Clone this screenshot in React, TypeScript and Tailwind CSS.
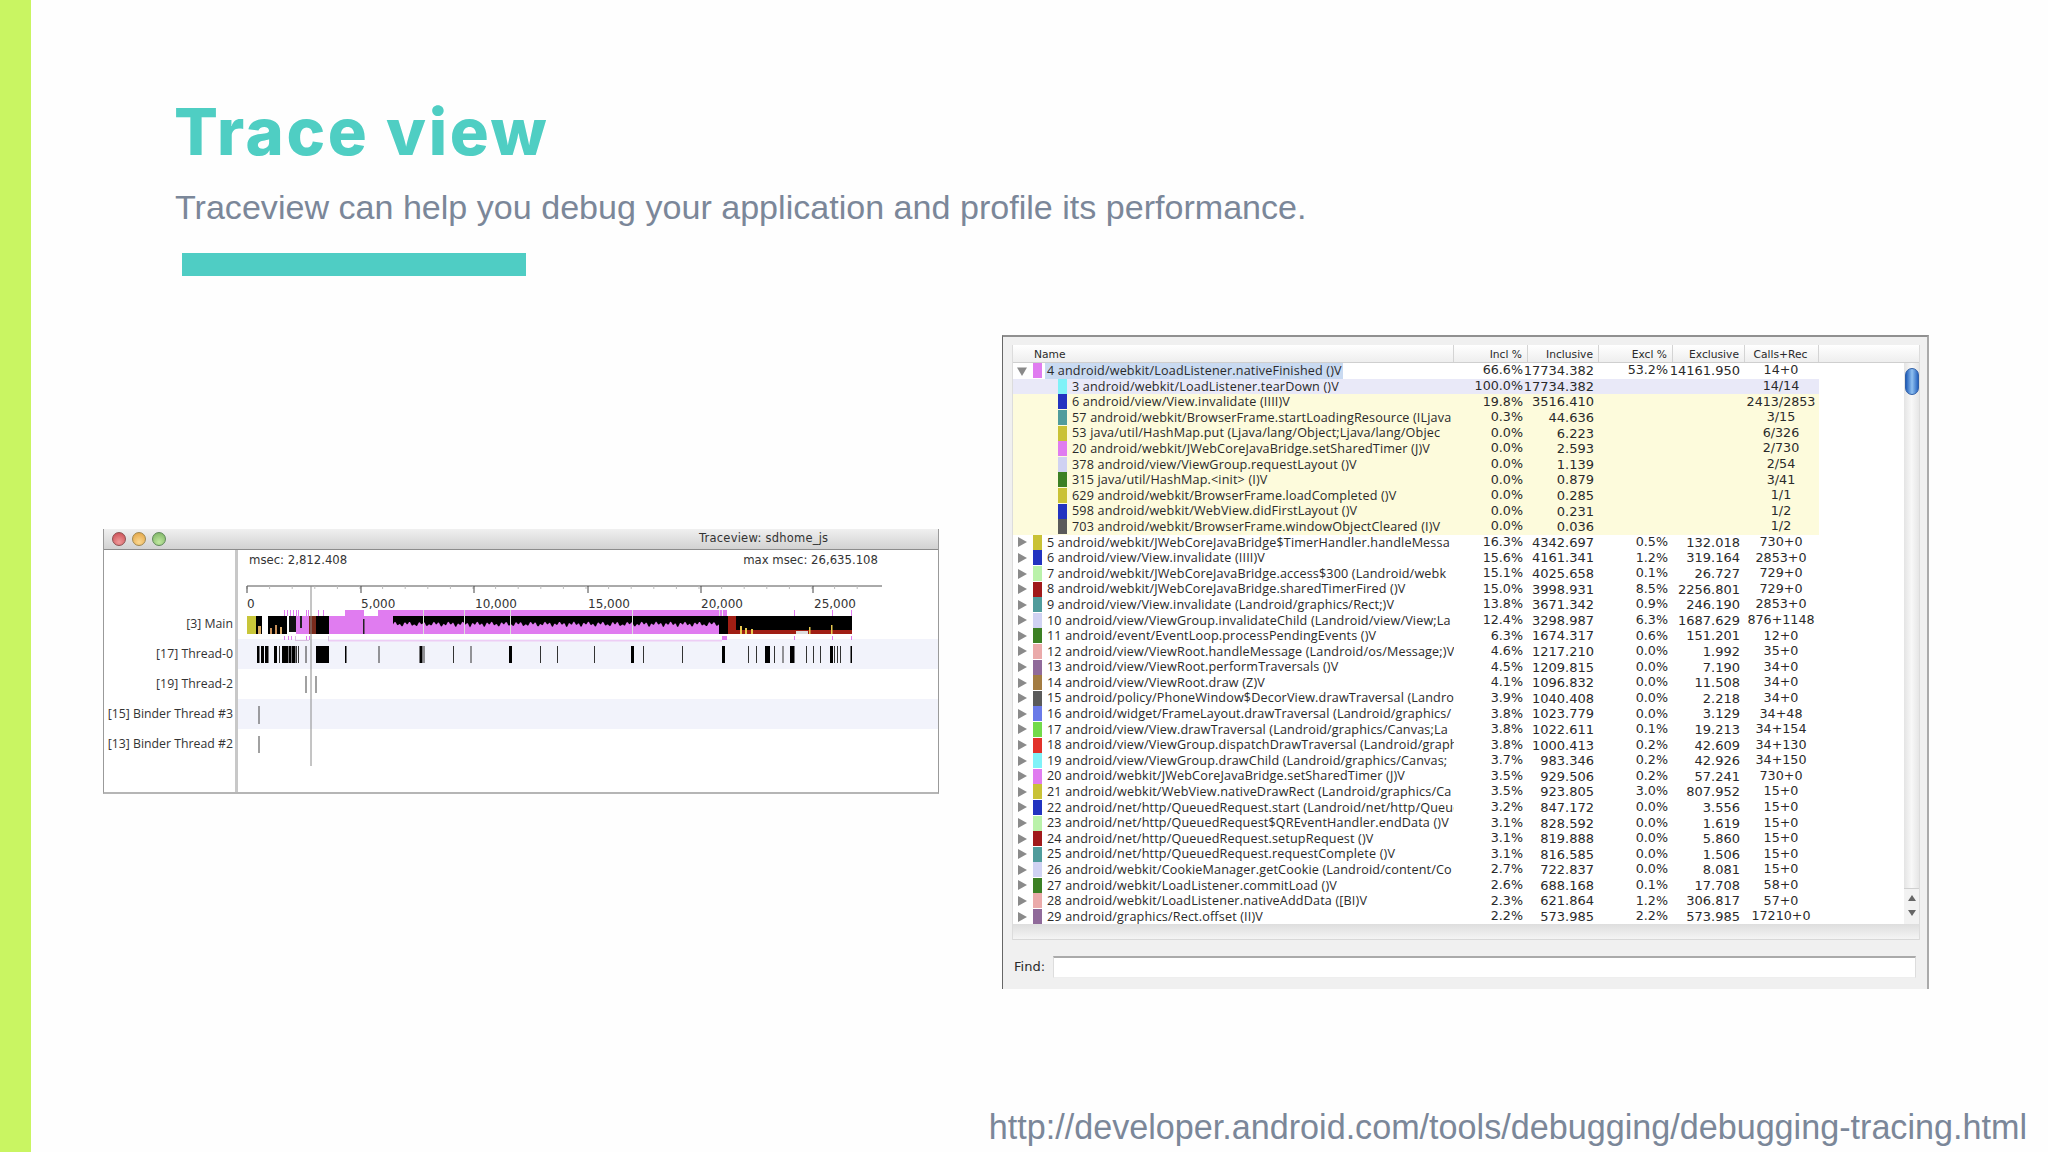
import React from "react";

type Row = { c: string; n: string; a: string; b: string; d?: string; e?: string; f: string; child?: boolean };

const pink = "#e07cf0", cyan = "#80f2f8", blue = "#2233c0", teal = "#509c9c", yel = "#c9c236", lav = "#d0d2f2",
  grn = "#3c8024", gray = "#5a5a5a", lgrn = "#baf2aa", dred = "#a01a1a", sal = "#eaaaaa", pur = "#906a9a",
  brn = "#a37c42", vio = "#6a7ae8", lime = "#72da4a", red = "#e2322a";

const rows: Row[] = [
  { c: pink, n: "4 android/webkit/LoadListener.nativeFinished ()V", a: "66.6%", b: "17734.382", d: "53.2%", e: "14161.950", f: "14+0" },
  { child: true, c: cyan, n: "3 android/webkit/LoadListener.tearDown ()V", a: "100.0%", b: "17734.382", f: "14/14" },
  { child: true, c: blue, n: "6 android/view/View.invalidate (IIII)V", a: "19.8%", b: "3516.410", f: "2413/2853" },
  { child: true, c: teal, n: "57 android/webkit/BrowserFrame.startLoadingResource (ILjava", a: "0.3%", b: "44.636", f: "3/15" },
  { child: true, c: yel, n: "53 java/util/HashMap.put (Ljava/lang/Object;Ljava/lang/Objec", a: "0.0%", b: "6.223", f: "6/326" },
  { child: true, c: pink, n: "20 android/webkit/JWebCoreJavaBridge.setSharedTimer (J)V", a: "0.0%", b: "2.593", f: "2/730" },
  { child: true, c: lav, n: "378 android/view/ViewGroup.requestLayout ()V", a: "0.0%", b: "1.139", f: "2/54" },
  { child: true, c: grn, n: "315 java/util/HashMap.<init> (I)V", a: "0.0%", b: "0.879", f: "3/41" },
  { child: true, c: yel, n: "629 android/webkit/BrowserFrame.loadCompleted ()V", a: "0.0%", b: "0.285", f: "1/1" },
  { child: true, c: blue, n: "598 android/webkit/WebView.didFirstLayout ()V", a: "0.0%", b: "0.231", f: "1/2" },
  { child: true, c: gray, n: "703 android/webkit/BrowserFrame.windowObjectCleared (I)V", a: "0.0%", b: "0.036", f: "1/2" },
  { c: yel, n: "5 android/webkit/JWebCoreJavaBridge$TimerHandler.handleMessa", a: "16.3%", b: "4342.697", d: "0.5%", e: "132.018", f: "730+0" },
  { c: blue, n: "6 android/view/View.invalidate (IIII)V", a: "15.6%", b: "4161.341", d: "1.2%", e: "319.164", f: "2853+0" },
  { c: lgrn, n: "7 android/webkit/JWebCoreJavaBridge.access$300 (Landroid/webk", a: "15.1%", b: "4025.658", d: "0.1%", e: "26.727", f: "729+0" },
  { c: dred, n: "8 android/webkit/JWebCoreJavaBridge.sharedTimerFired ()V", a: "15.0%", b: "3998.931", d: "8.5%", e: "2256.801", f: "729+0" },
  { c: teal, n: "9 android/view/View.invalidate (Landroid/graphics/Rect;)V", a: "13.8%", b: "3671.342", d: "0.9%", e: "246.190", f: "2853+0" },
  { c: lav, n: "10 android/view/ViewGroup.invalidateChild (Landroid/view/View;La", a: "12.4%", b: "3298.987", d: "6.3%", e: "1687.629", f: "876+1148" },
  { c: grn, n: "11 android/event/EventLoop.processPendingEvents ()V", a: "6.3%", b: "1674.317", d: "0.6%", e: "151.201", f: "12+0" },
  { c: sal, n: "12 android/view/ViewRoot.handleMessage (Landroid/os/Message;)V", a: "4.6%", b: "1217.210", d: "0.0%", e: "1.992", f: "35+0" },
  { c: pur, n: "13 android/view/ViewRoot.performTraversals ()V", a: "4.5%", b: "1209.815", d: "0.0%", e: "7.190", f: "34+0" },
  { c: brn, n: "14 android/view/ViewRoot.draw (Z)V", a: "4.1%", b: "1096.832", d: "0.0%", e: "11.508", f: "34+0" },
  { c: gray, n: "15 android/policy/PhoneWindow$DecorView.drawTraversal (Landroid", a: "3.9%", b: "1040.408", d: "0.0%", e: "2.218", f: "34+0" },
  { c: vio, n: "16 android/widget/FrameLayout.drawTraversal (Landroid/graphics/", a: "3.8%", b: "1023.779", d: "0.0%", e: "3.129", f: "34+48" },
  { c: lime, n: "17 android/view/View.drawTraversal (Landroid/graphics/Canvas;La", a: "3.8%", b: "1022.611", d: "0.1%", e: "19.213", f: "34+154" },
  { c: red, n: "18 android/view/ViewGroup.dispatchDrawTraversal (Landroid/graphics", a: "3.8%", b: "1000.413", d: "0.2%", e: "42.609", f: "34+130" },
  { c: cyan, n: "19 android/view/ViewGroup.drawChild (Landroid/graphics/Canvas;", a: "3.7%", b: "983.346", d: "0.2%", e: "42.926", f: "34+150" },
  { c: pink, n: "20 android/webkit/JWebCoreJavaBridge.setSharedTimer (J)V", a: "3.5%", b: "929.506", d: "0.2%", e: "57.241", f: "730+0" },
  { c: yel, n: "21 android/webkit/WebView.nativeDrawRect (Landroid/graphics/Ca", a: "3.5%", b: "923.805", d: "3.0%", e: "807.952", f: "15+0" },
  { c: blue, n: "22 android/net/http/QueuedRequest.start (Landroid/net/http/Queue", a: "3.2%", b: "847.172", d: "0.0%", e: "3.556", f: "15+0" },
  { c: lgrn, n: "23 android/net/http/QueuedRequest$QREventHandler.endData ()V", a: "3.1%", b: "828.592", d: "0.0%", e: "1.619", f: "15+0" },
  { c: dred, n: "24 android/net/http/QueuedRequest.setupRequest ()V", a: "3.1%", b: "819.888", d: "0.0%", e: "5.860", f: "15+0" },
  { c: teal, n: "25 android/net/http/QueuedRequest.requestComplete ()V", a: "3.1%", b: "816.585", d: "0.0%", e: "1.506", f: "15+0" },
  { c: lav, n: "26 android/webkit/CookieManager.getCookie (Landroid/content/Co", a: "2.7%", b: "722.837", d: "0.0%", e: "8.081", f: "15+0" },
  { c: grn, n: "27 android/webkit/LoadListener.commitLoad ()V", a: "2.6%", b: "688.168", d: "0.1%", e: "17.708", f: "58+0" },
  { c: sal, n: "28 android/webkit/LoadListener.nativeAddData ([BI)V", a: "2.3%", b: "621.864", d: "1.2%", e: "306.817", f: "57+0" },
  { c: pur, n: "29 android/graphics/Rect.offset (II)V", a: "2.2%", b: "573.985", d: "2.2%", e: "573.985", f: "17210+0" },
];

const thread0: [number, number][] = [
  [257, 2.5], [261, 3], [265, 3.5], [274, 3], [279, 1], [282, 6], [288.5, 3], [292, 3.5], [296, 1], [298, 1], [305.5, 1],
  [316, 13], [345, 1.5], [378.5, 1], [419.5, 3], [423.5, 1], [453, 1], [470.5, 1], [509, 3], [540, 1], [557, 1], [594, 1],
  [631, 3], [643, 1], [682, 1], [722, 3], [748, 1], [756, 1], [765, 5], [774, 1], [782.5, 1], [790, 4.5], [806, 1], [813, 1],
  [820, 1], [830, 3], [834, 1], [837, 1], [840, 1], [850.5, 1.5],
];

const wave = () => {
  const pts: string[] = ["393,634"];
  for (let x = 393; x <= 719; x += 1) {
    const y = 626 - 3 * Math.abs(Math.sin(x / 4.4)) + 1.4 * Math.sin(x * 1.3);
    pts.push(`${x},${y.toFixed(1)}`);
  }
  pts.push("719,634");
  return pts.join(" ");
};

const ticksMajor = [247, 361, 474, 588, 701, 813];
const minor = Array.from({ length: 28 }, (_, i) => 247 + i * 22.6);
const labels: [number, string][] = [[247, "0"], [361, "5,000"], [475, "10,000"], [588, "15,000"], [701, "20,000"], [814, "25,000"]];

function Timeline() {
  return (
    <svg width="698" height="243" viewBox="238 549 698 243">
      <line x1="247" x2="882" y1="586" y2="586" stroke="#555" strokeWidth="1" />
      {minor.map((x) => <line key={x} x1={x} x2={x} y1="586" y2="589" stroke="#bbb" />)}
      {ticksMajor.map((x) => <line key={x} x1={x} x2={x} y1="586" y2="593" stroke="#444" />)}
      {labels.map(([x, t]) => (
        <text key={t} x={x} y="607.5" fontSize="12" fontFamily="'DejaVu Sans', sans-serif" fill="#333">{t}</text>
      ))}
      <rect x="296" y="616" width="49" height="18" fill={pink} />
      <rect x="345" y="610" width="19" height="24" fill={pink} />
      <rect x="364" y="616" width="14" height="18" fill={pink} />
      <rect x="378" y="610" width="349" height="24" fill={pink} />
      <rect x="247" y="616" width="9" height="18" fill="#c8c63a" />
      <rect x="256" y="616" width="6" height="18" fill="#000" />
      <rect x="258" y="626" width="3" height="8" fill="#d8a860" />
      <rect x="268" y="616" width="19" height="18" fill="#000" />
      <rect x="270" y="628" width="2" height="6" fill="#c9905a" />
      <rect x="275" y="625" width="2" height="9" fill="#c9905a" />
      <rect x="280" y="627" width="2" height="7" fill="#e0b070" />
      <rect x="289" y="616" width="7" height="16" fill="#111" />
      <rect x="300" y="616" width="2" height="12" fill="#222" />
      <rect x="309" y="616" width="7" height="18" fill="#7a2a1c" />
      <rect x="316" y="616" width="13" height="18" fill="#000" />
      <rect x="363" y="619" width="1.5" height="15" fill="#222" />
      <rect x="393" y="616" width="326" height="18" fill="#000" />
      <polygon points={wave()} fill={pink} />
      {[423, 464, 510, 632, 719].map((x) => <rect key={x} x={x} y="610" width="1" height="24" fill="#ddd" />)}
      <rect x="722" y="610" width="1" height="24" fill="#eee" />
      <rect x="719" y="616" width="133" height="18" fill="#000" />
      <rect x="728" y="616" width="8" height="18" fill="#a01e14" />
      <rect x="736" y="630" width="116" height="4" fill="#a01e14" />
      <rect x="740" y="626" width="2" height="8" fill="#e8c850" />
      <rect x="745" y="628" width="2" height="6" fill="#e8c850" />
      <rect x="751" y="629" width="2" height="5" fill="#e8c850" />
      <rect x="796" y="631" width="12" height="3" fill="#ddd" />
      <rect x="809" y="627" width="1.5" height="7" fill="#e8c850" />
      <rect x="831" y="625" width="1.5" height="9" fill="#e8c850" />
      {[284, 287, 290, 293, 296, 298, 306, 308, 318, 323, 794, 832, 851].map((x) => (
        <rect key={x} x={x} y="610" width="1" height="6" fill={pink} />
      ))}
      {[284, 288, 291, 306, 309, 794, 832, 851].map((x) => (
        <rect key={x} x={x} y="636" width="1" height="4" fill={pink} />
      ))}
      <rect x="295" y="640" width="14" height="1" fill="#d9c0e0" />
      <rect x="328" y="640" width="394" height="1.5" fill="#eecdf5" />
      <rect x="295" y="636" width="1" height="5" fill="#d9c0e0" />
      <rect x="328" y="636" width="1" height="5" fill="#d9c0e0" />
      <rect x="722" y="636" width="5" height="4" fill={pink} />
      {thread0.map(([x, w]) => <rect key={x} x={x} y="646" width={w} height="17" fill={w <= 1 ? "#333" : "#000"} />)}
      <rect x="305.5" y="676" width="1" height="17" fill="#444" />
      <rect x="315.5" y="676" width="1" height="17" fill="#444" />
      <rect x="258.5" y="706" width="1" height="18" fill="#444" />
      <rect x="258.5" y="736" width="1" height="17" fill="#444" />
      <line x1="311" x2="311" y1="586" y2="766" stroke="#8a8a8a" strokeWidth="1" />
    </svg>
  );
}

const threads = ["[3] Main", "[17] Thread-0", "[19] Thread-2", "[15] Binder Thread #3", "[13] Binder Thread #2"];

function TraceWindow() {
  return (
    <div className="mt-[194px] flex h-[265px] w-[836px] shrink-0 flex-col border-x border-b-2 border-x-[#9a9a9a] border-b-[#b5b5b5] bg-white">
      <div className="flex h-[21px] shrink-0 items-center border-b border-[#8c8c8c] bg-gradient-to-b from-[#f0f0f0] to-[#d2d2d2]">
        <div className="ml-[8px] flex gap-[6px]">
          <span className="h-[14px] w-[14px] rounded-full border border-[#8c5050] bg-[radial-gradient(circle_at_50%_75%,#f09a9a,#c84850)]" />
          <span className="h-[14px] w-[14px] rounded-full border border-[#a08850] bg-[radial-gradient(circle_at_50%_75%,#fbd890,#e0a040)]" />
          <span className="h-[14px] w-[14px] rounded-full border border-[#60885a] bg-[radial-gradient(circle_at_50%_75%,#c0e8a0,#78b060)]" />
        </div>
        <span className="ml-[533px] text-[11.5px] tracking-[0.02em] text-[#333] [font-family:'DejaVu_Sans',sans-serif]">Traceview: sdhome_js</span>
      </div>
      <div className="flex min-h-0 flex-1 text-[#333]">
        <div className="w-[134px] shrink-0 border-r-[3px] border-[#c8c8c8] pt-[59px] text-right text-[12.3px] [font-family:'Open_Sans',sans-serif]">
          {threads.map((t) => (
            <div key={t} className="flex h-[30px] items-center justify-end whitespace-nowrap pr-[2px]">{t}</div>
          ))}
        </div>
        <div className="relative min-w-0 flex-1">
          <div className="flex h-[59px] items-start justify-between pl-[11px] pr-[60px] pt-[2px] text-[11.7px] [font-family:'DejaVu_Sans',sans-serif]">
            <span>msec: 2,812.408</span>
            <span>max msec: 26,635.108</span>
          </div>
          {[0, 1, 2, 3, 4].map((i) => (
            <div key={i} className={i % 2 === 1 ? "h-[30px] bg-[#f2f3fb]" : "h-[30px]"} />
          ))}
          <div className="absolute left-0 top-[-1px]"><Timeline /></div>
        </div>
      </div>
    </div>
  );
}

function Tri({ down }: { down?: boolean }) {
  return (
    <svg width="10" height="10" viewBox="0 0 10 10" className="shrink-0">
      <polygon points={down ? "0,1.5 10,1.5 5,10" : "1,0 10,5 1,10"} fill="#8a8a8a" />
    </svg>
  );
}

const grid = "grid h-[15.6px] w-[806px] grid-cols-[441px_74px_71px_74px_72px_74px] items-center leading-none";
const pct = "flex justify-end whitespace-nowrap pr-[5px] text-[12.7px] [font-family:'DejaVu_Sans',sans-serif]";
const val = "flex justify-end whitespace-nowrap pr-[5px] text-[13px] [font-family:'DejaVu_Sans',sans-serif]";

function ProfileTable() {
  return (
    <div className="flex-1 overflow-hidden bg-white">
      {rows.map((r, i) => (
        <div key={r.n + i} className={`${grid} ${i === 1 ? "bg-[#e9e9f8]" : r.child ? "bg-[#fdfbdc]" : ""}`}>
          <div className="flex h-full items-center overflow-hidden whitespace-nowrap pl-[4px]">
            {r.child ? <span className="w-[10px] shrink-0" /> : <Tri down={i === 0} />}
            <span className={`ml-[6px] h-[15px] w-[9px] shrink-0 ${r.child ? "ml-[31px]" : ""}`} style={{ backgroundColor: r.c }} />
            <span className={`ml-[3px] h-full pl-[2px] pr-[1px] text-[12.6px] leading-[15.6px] tracking-[0.16px] [font-family:'Open_Sans',sans-serif] ${i === 0 ? "bg-[#c9daf1]" : ""}`}>{r.n}</span>
          </div>
          <div className={pct}>{r.a}</div>
          <div className={val}>{r.b}</div>
          <div className={pct}>{r.d}</div>
          <div className={val}>{r.e}</div>
          <div className="pr-[2px] text-center text-[12.7px] [font-family:'DejaVu_Sans',sans-serif]">{r.f}</div>
        </div>
      ))}
    </div>
  );
}

function ProfileWindow() {
  const head = "border-r border-[#d4d4d4] pr-[5px] pt-[3px] text-right";
  return (
    <div className="flex h-[654px] w-[927px] shrink-0 flex-col border-l border-r-2 border-t-2 border-l-[#666] border-r-[#aaa] border-t-[#909090] bg-[#f0f0f0] text-[#2a2a2a]">
      <div className="ml-[9px] mr-[7px] mt-[8px] flex h-[595px] flex-col border-x border-[#dcdcdc]">
        <div className="flex h-[18px] shrink-0 border-b border-[#cfcfcf] bg-gradient-to-b from-white to-[#eeeeee] text-[10.7px] leading-[13px] [font-family:'DejaVu_Sans',sans-serif]">
          <div className="grid w-[806px] grid-cols-[441px_74px_71px_74px_72px_74px]">
            <div className="border-r border-[#d4d4d4] pl-[21px] pt-[3px]">Name</div>
            <div className={head}>Incl %</div>
            <div className={head}>Inclusive</div>
            <div className={head}>Excl %</div>
            <div className={head}>Exclusive</div>
            <div className="border-r border-[#d4d4d4] pt-[3px] pr-[2px] text-center">Calls+Rec</div>
          </div>
        </div>
        <div className="flex h-[561px] shrink-0">
          <ProfileTable />
          <div className="relative flex w-[15px] shrink-0 flex-col items-center bg-gradient-to-r from-[#e4e4e4] via-[#f8f8f8] to-[#e6e6e6]">
            <div className="mt-[5px] h-[27px] w-[14px] rounded-[7px] border border-[#2f5fa8] bg-gradient-to-r from-[#1f5cb8] via-[#8fc0f0] to-[#2563be]" />
            <div className="mt-auto flex h-[36px] w-full flex-col items-center justify-center gap-[9px] border-t border-[#d0d0d0] bg-[#f2f2f2] pb-[2px]">
              <svg width="8" height="6" viewBox="0 0 8 6"><polygon points="4,0 8,6 0,6" fill="#666" /></svg>
              <svg width="8" height="6" viewBox="0 0 8 6"><polygon points="0,0 8,0 4,6" fill="#666" /></svg>
            </div>
          </div>
        </div>
        <div className="h-[16px] shrink-0 border-b border-[#d8d8d8] bg-gradient-to-b from-[#dedede] to-[#f4f4f4]" />
      </div>
      <div className="ml-[11px] mr-[11px] mt-[16px] flex items-center gap-[8px]">
        <span className="text-[13px] [font-family:'DejaVu_Sans',sans-serif]">Find:</span>
        <div className="h-[22px] flex-1 border-x border-b border-t-2 border-x-[#dddddd] border-b-[#eeeeee] border-t-[#aaaaaa] bg-white" />
      </div>
    </div>
  );
}

export default function App() {
  return (
    <div className="flex h-[1152px] w-[2048px] overflow-hidden bg-[#fefefe]">
      <div className="w-[31px] shrink-0 bg-[#c9f562]" />
      <div className="flex min-w-0 flex-1 flex-col">
        <div className="h-[335px] shrink-0 pl-[144px]">
          <h1 className="-ml-[1px] pt-[92px] text-[65px] font-extrabold leading-[80px] tracking-[0.04em] text-[#4fcec3] [font-family:Inter,sans-serif]">Trace view</h1>
          <p className="mt-[15px] text-[34.1px] leading-[40px] text-[#7b8799] [font-family:'Liberation_Sans',Arial,sans-serif]">Traceview can help you debug your application and profile its performance.</p>
          <div className="ml-[7px] mt-[26px] h-[23px] w-[344px] bg-[#4fcdc4]" />
        </div>
        <div className="flex items-start gap-[63px] pl-[72px]">
          <TraceWindow />
          <ProfileWindow />
        </div>
        <div className="mt-[118px] flex justify-end pr-[21px] text-[34.15px] leading-[40px] text-[#7b8799] [font-family:'Liberation_Sans',Arial,sans-serif]">
          http://developer.android.com/tools/debugging/debugging-tracing.html
        </div>
      </div>
    </div>
  );
}
